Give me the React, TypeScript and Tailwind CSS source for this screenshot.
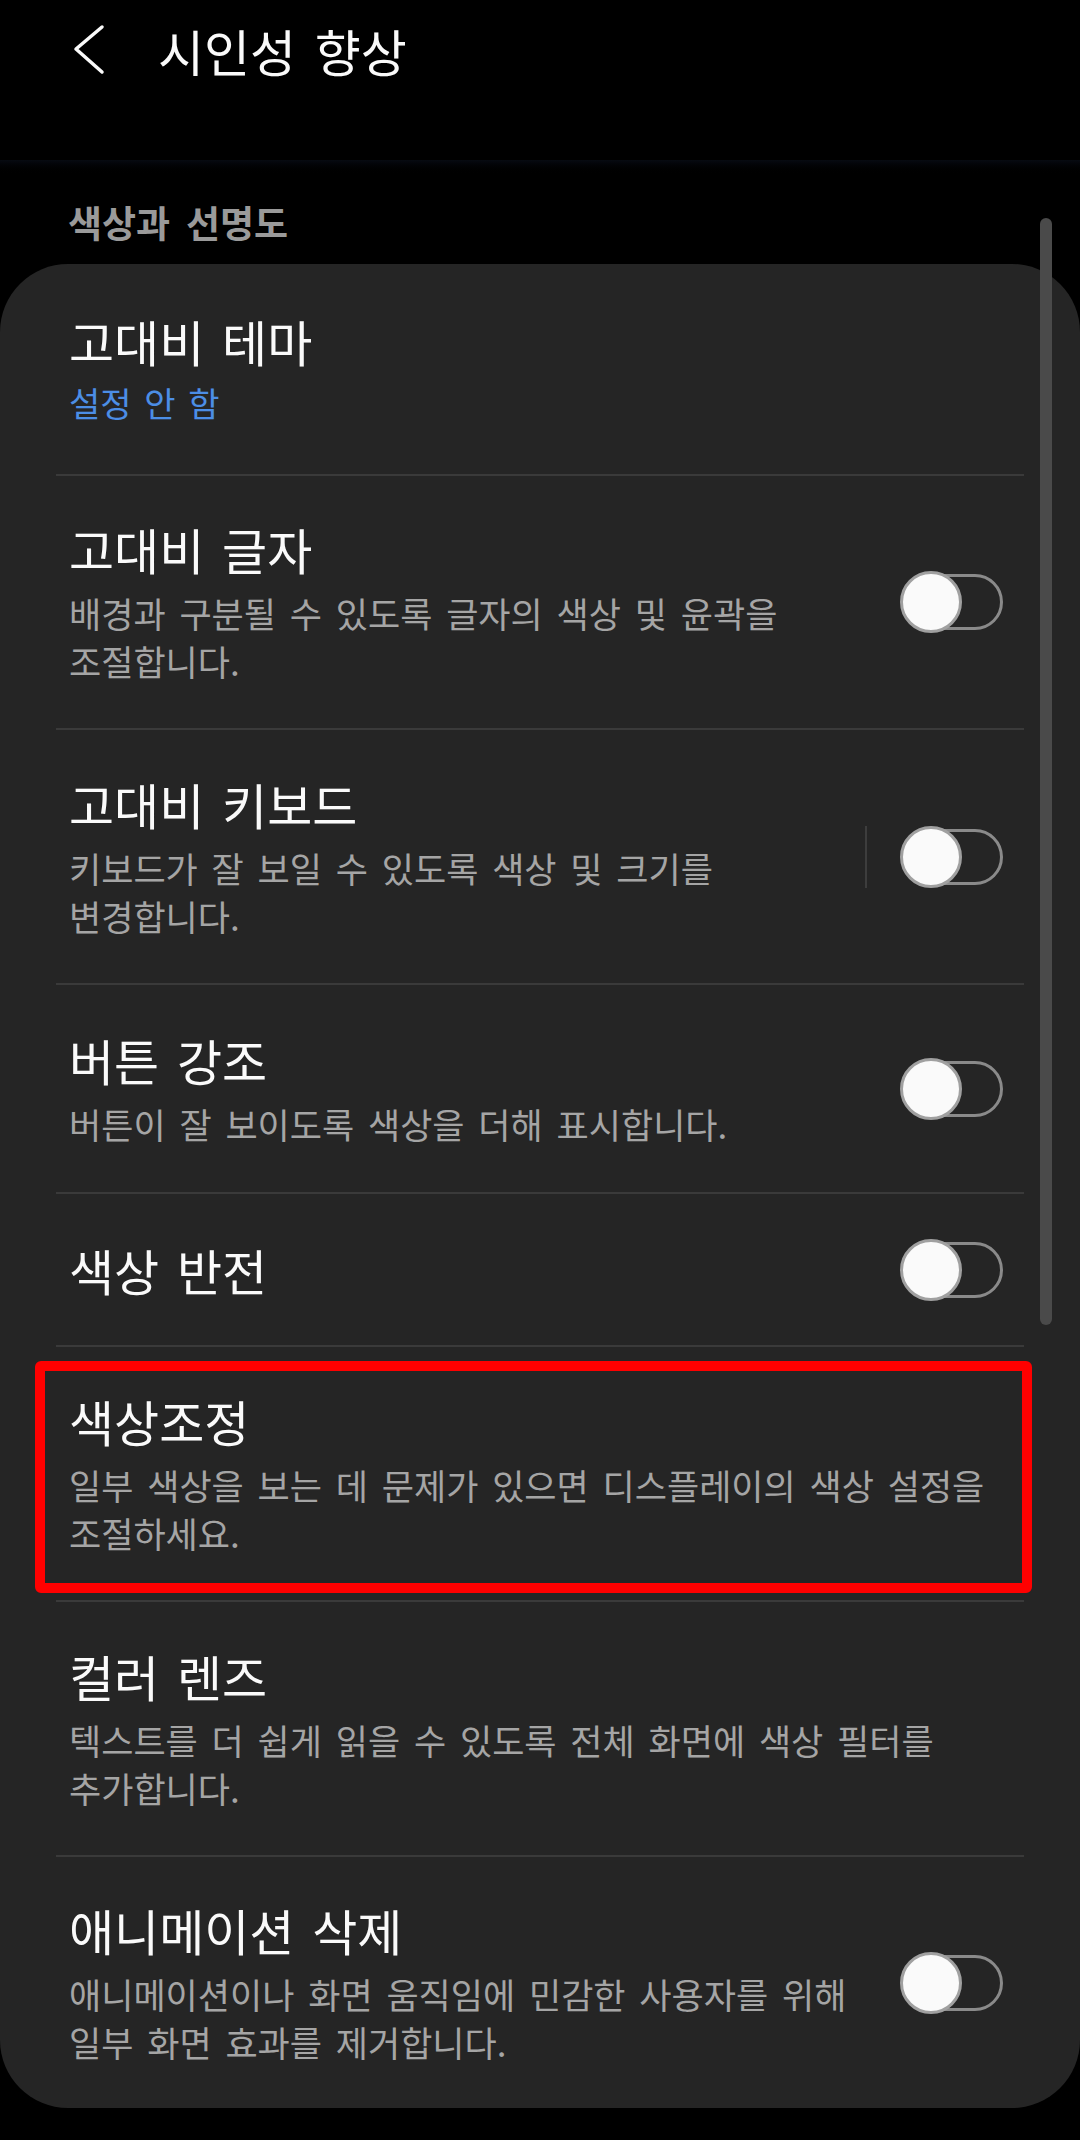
import type { ReactNode } from "react";

const font = { fontFamily: '"Noto Sans CJK KR", "Noto Sans", sans-serif' };

function Toggle() {
	return (
		<div className="relative w-[103px] h-[62px] shrink-0">
			<div className="absolute right-0 top-[3px] w-[98px] h-[56px] rounded-full border-[3px] border-[#8a8a8a]" />
			<div className="absolute left-0 top-0 w-[62px] h-[62px] rounded-full bg-[#fafafa] border-[3px] border-[#a0a0a0]" />
		</div>
	);
}

interface RowProps {
	title: string;
	lines?: string[];
	sub?: string;
	toggle?: boolean;
	split?: boolean;
	height: string;
	children?: ReactNode;
}

function Row({ title, lines, sub, toggle, split, height, children }: RowProps) {
	return (
		<div className={`relative flex items-center pl-[69px] pr-[77px] ${height}`}>
			{children}
			<div className="flex-1 flex flex-col">
				<span className="text-[49px] leading-[60px] text-[#fafafa] whitespace-nowrap [word-spacing:0.14em]">
					{title}
				</span>
				{sub && (
					<span className="mt-[8px] text-[34px] leading-[48px] text-[#4c8ee6] whitespace-nowrap [word-spacing:0.15em]">
						{sub}
					</span>
				)}
				{lines && (
					<div className="mt-[10px] flex flex-col">
						{lines.map((l) => (
							<span
								key={l}
								className="text-[35px] leading-[48px] text-[#a5a5a5] whitespace-nowrap [word-spacing:0.17em]"
							>
								{l}
							</span>
						))}
					</div>
				)}
			</div>
			{split && <div className="w-[2px] h-[62px] bg-[#3d3d3d] mr-[33px]" />}
			{toggle && <Toggle />}
		</div>
	);
}

function Divider() {
	return <div className="mx-[56px] h-[2px] bg-[#3a3a3a]" />;
}

export default function App() {
	return (
		<div className="relative w-[1080px] h-[2140px] bg-black overflow-hidden" style={font}>
			{/* top bar */}
			<div className="flex items-center h-[100px]">
				<svg className="ml-[72px]" width="34" height="52" viewBox="0 0 34 52">
					<polyline
						points="30,3 4,25 30,48"
						fill="none"
						stroke="#fafafa"
						strokeWidth="3.5"
						strokeLinecap="round"
						strokeLinejoin="round"
					/>
				</svg>
				<span className="ml-[52px] text-[50px] leading-[60px] text-[#fafafa] [word-spacing:0.15em]">
					시인성 향상
				</span>
			</div>
			<div className="mt-[60px] h-[16px] bg-gradient-to-b from-[#070b12] to-black" />

			<div className="h-[88px] pt-[6px] pl-[68px] flex items-center">
				<span className="text-[37px] font-bold text-[#9a9a9a] [word-spacing:0.2em]">
					색상과 선명도
				</span>
			</div>

			<div className="bg-[#252525] rounded-[68px] overflow-hidden">
				<Row title="고대비 테마" sub="설정 안 함" height="h-[210px]" />
				<Divider />
				<Row
					title="고대비 글자"
					lines={["배경과 구분될 수 있도록 글자의 색상 및 윤곽을", "조절합니다."]}
					toggle
					height="h-[252px]"
				/>
				<Divider />
				<Row
					title="고대비 키보드"
					lines={["키보드가 잘 보일 수 있도록 색상 및 크기를", "변경합니다."]}
					toggle
					split
					height="h-[253px]"
				/>
				<Divider />
				<Row
					title="버튼 강조"
					lines={["버튼이 잘 보이도록 색상을 더해 표시합니다."]}
					toggle
					height="h-[207px]"
				/>
				<Divider />
				<Row title="색상 반전" toggle height="h-[151px]" />
				<Divider />
				<Row
					title="색상조정"
					lines={["일부 색상을 보는 데 문제가 있으면 디스플레이의 색상 설정을", "조절하세요."]}
					height="h-[253px]"
				>
					<div className="absolute left-[35px] right-[48px] top-[14px] bottom-[7px] border-[10px] border-[#ff0000] rounded-[6px]" />
				</Row>
				<Divider />
				<Row
					title="컬러 렌즈"
					lines={["텍스트를 더 쉽게 읽을 수 있도록 전체 화면에 색상 필터를", "추가합니다."]}
					height="h-[253px]"
				/>
				<Divider />
				<Row
					title="애니메이션 삭제"
					lines={["애니메이션이나 화면 움직임에 민감한 사용자를 위해", "일부 화면 효과를 제거합니다."]}
					toggle
					height="h-[251px]"
				/>
			</div>

			{/* scrollbar */}
			<div className="absolute right-[28px] top-[218px] w-[12px] h-[1107px] rounded-full bg-[#4a4a4a]" />
		</div>
	);
}
